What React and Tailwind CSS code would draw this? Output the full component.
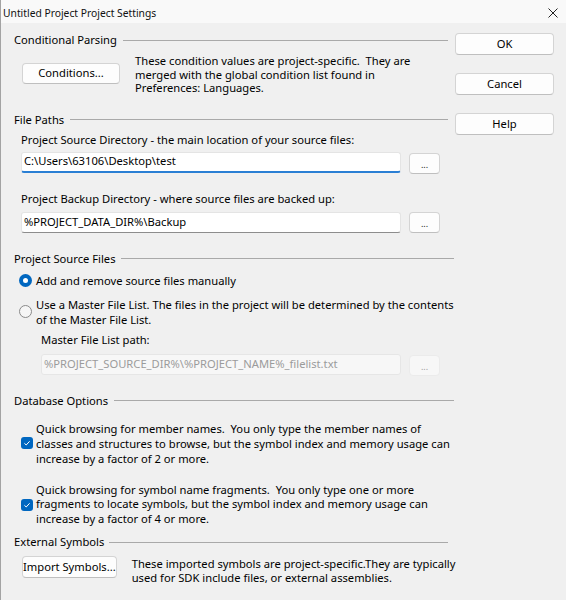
import React from "react";

function Header({ label, lineClass }) {
  return (
    <div className="flex items-center h-[14px]">
      <span className="whitespace-nowrap leading-[14px]">{label}</span>
      <div className={lineClass} />
    </div>
  );
}

function Btn({ children, className }) {
  return (
    <div
      className={
        "flex items-center justify-center rounded-[4px] border border-[#d4d4d4] border-b-[#bfbfbf] bg-[#fdfdfd] whitespace-nowrap " +
        className
      }
    >
      {children}
    </div>
  );
}

function Dots({ disabled }) {
  return (
    <div
      className={
        disabled
          ? "ml-[8px] mt-[1px] w-[31px] h-[21px] rounded-[4px] border border-[#ebebeb] bg-[#f7f7f7] flex items-end justify-center pb-[4px] text-[9px] leading-[9px] text-[#a0a0a0]"
          : "ml-[8px] mt-[1px] w-[31px] h-[21px] rounded-[4px] border border-[#d4d4d4] border-b-[#bfbfbf] bg-[#fdfdfd] flex items-end justify-center pb-[4px] text-[9px] leading-[9px] text-[#222]"
      }
    >
      ...
    </div>
  );
}

function Check() {
  return (
    <div className="w-[12px] h-[12px] shrink-0 rounded-[3px] bg-[#0067c0] flex items-center justify-center">
      <svg width="8" height="8" viewBox="0 0 8 8">
        <path d="M1.4 4.3 L3.2 6 L6.6 2.3" stroke="white" strokeWidth="1" fill="none" />
      </svg>
    </div>
  );
}

export default function App() {
  return (
    <div className="w-[566px] h-[600px] overflow-hidden bg-[#f0f0f0] border-l border-[#a3a3a3] text-[11.2px] text-[#000] font-['Noto_Sans',sans-serif] flex flex-col">
      {/* Title bar */}
      <div className="h-[23px] shrink-0 bg-[#f9f9f9] flex items-center justify-between pl-[2px] pr-[8px]">
        <span className="text-[10.3px] leading-[14px] pt-[2px] text-[#111]">Untitled Project Project Settings</span>
        <svg width="10" height="10" viewBox="0 0 10 10" className="mt-[2px]">
          <path d="M0.5 0.5 L9.5 9.5 M9.5 0.5 L0.5 9.5" stroke="#222" strokeWidth="1" />
        </svg>
      </div>

      {/* Body */}
      <div className="flex">
        {/* Left column */}
        <div className="ml-[13px] w-[440px] flex flex-col">
          <div className="mt-[10px]">
            <Header label="Conditional Parsing" lineClass="ml-[6px] mr-[6px] flex-1 h-px bg-[#a9a9a9]" />
          </div>
          <div className="mt-[7px] flex items-start">
            <Btn className="ml-[8px] mt-[9px] w-[98px] h-[21px]">Conditions...</Btn>
            <div className="ml-[15px] leading-[13.6px] whitespace-pre">
              <div>These condition values are project-specific.  They are</div>
              <div>merged with the global condition list found in</div>
              <div>Preferences: Languages.</div>
            </div>
          </div>

          <div className="mt-[18px]">
            <Header label="File Paths" lineClass="ml-[6px] mr-[6px] flex-1 h-px bg-[#a9a9a9]" />
          </div>
          <div className="mt-[6px] ml-[7px] leading-[14px] whitespace-nowrap">
            Project Source Directory - the main location of your source files:
          </div>
          <div className="mt-[5px] ml-[7px] flex items-start">
            <div className="w-[380px] h-[21px] bg-white border border-[#e4e4e4] border-b-2 border-b-[#2a7fd4] rounded-[3px] flex items-center pl-[2px] whitespace-nowrap">
              C:\Users\63106\Desktop\test
            </div>
            <Dots />
          </div>
          <div className="mt-[18px] ml-[7px] leading-[14px] whitespace-nowrap">
            Project Backup Directory - where source files are backed up:
          </div>
          <div className="mt-[5px] ml-[7px] flex items-start">
            <div className="w-[380px] h-[21px] mt-[1px] bg-white border border-[#e4e4e4] border-b-[#8d8d8d] rounded-[3px] flex items-center pl-[2px] whitespace-nowrap">
              %PROJECT_DATA_DIR%\Backup
            </div>
            <Dots />
          </div>

          <div className="mt-[19px]">
            <Header label="Project Source Files" lineClass="ml-[5px] flex-1 h-px bg-[#a9a9a9]" />
          </div>
          <div className="mt-[8px] ml-[5px] flex items-center h-[14px]">
            <div className="w-[13px] h-[13px] shrink-0 rounded-full bg-[#0067c0] flex items-center justify-center">
              <div className="w-[5px] h-[5px] rounded-full bg-white" />
            </div>
            <span className="ml-[4px] leading-[14px] whitespace-nowrap">Add and remove source files manually</span>
          </div>
          <div className="mt-[9px] ml-[5px] flex items-center">
            <div className="w-[13px] h-[13px] shrink-0 rounded-full border border-[#8a8a8a] bg-[#f6f6f6]" />
            <div className="ml-[4px] leading-[15px] whitespace-nowrap">
              <div>Use a Master File List. The files in the project will be determined by the contents</div>
              <div>of the Master File List.</div>
            </div>
          </div>
          <div className="mt-[6px] ml-[27px] leading-[14px] whitespace-nowrap">Master File List path:</div>
          <div className="mt-[7px] ml-[27px] flex items-start">
            <div className="w-[360px] h-[21px] bg-[#f7f7f7] border border-[#e6e6e6] rounded-[3px] flex items-center pl-[2px] whitespace-nowrap text-[#9b9b9b]">
              %PROJECT_SOURCE_DIR%\%PROJECT_NAME%_filelist.txt
            </div>
            <Dots disabled />
          </div>

          <div className="mt-[18px]">
            <Header label="Database Options" lineClass="ml-[6px] flex-1 h-px bg-[#a9a9a9]" />
          </div>
          <div className="mt-[13px] ml-[7px] flex items-center">
            <Check />
            <div className="ml-[3px] leading-[15px] whitespace-pre">
              <div>Quick browsing for member names.  You only type the member names of</div>
              <div>classes and structures to browse, but the symbol index and memory usage can</div>
              <div>increase by a factor of 2 or more.</div>
            </div>
          </div>
          <div className="mt-[17px] ml-[7px] flex items-center">
            <Check />
            <div className="ml-[3px] leading-[14.5px] whitespace-pre">
              <div>Quick browsing for symbol name fragments.  You only type one or more</div>
              <div>fragments to locate symbols, but the symbol index and memory usage can</div>
              <div>increase by a factor of 4 or more.</div>
            </div>
          </div>

          <div className="mt-[9px]">
            <Header label="External Symbols" lineClass="ml-[5px] mr-[6px] flex-1 h-px bg-[#a9a9a9]" />
          </div>
          <div className="mt-[7px] flex items-start">
            <Btn className="ml-[8px] w-[98px] h-[22px]">Import Symbols...</Btn>
            <div className="ml-[15px] mt-[1px] leading-[13.6px] whitespace-nowrap">
              <div>These imported symbols are project-specific.They are typically</div>
              <div>used for SDK include files, or external assemblies.</div>
            </div>
          </div>
        </div>

        {/* Right column */}
        <div className="ml-[1px] w-[99px] flex flex-col">
          <Btn className="mt-[10px] w-[99px] h-[22px] border-[#6aa6e0] border-b-[#5a98d6]">OK</Btn>
          <Btn className="mt-[18px] w-[99px] h-[22px]">Cancel</Btn>
          <Btn className="mt-[18px] w-[99px] h-[22px]">Help</Btn>
        </div>
      </div>
    </div>
  );
}
